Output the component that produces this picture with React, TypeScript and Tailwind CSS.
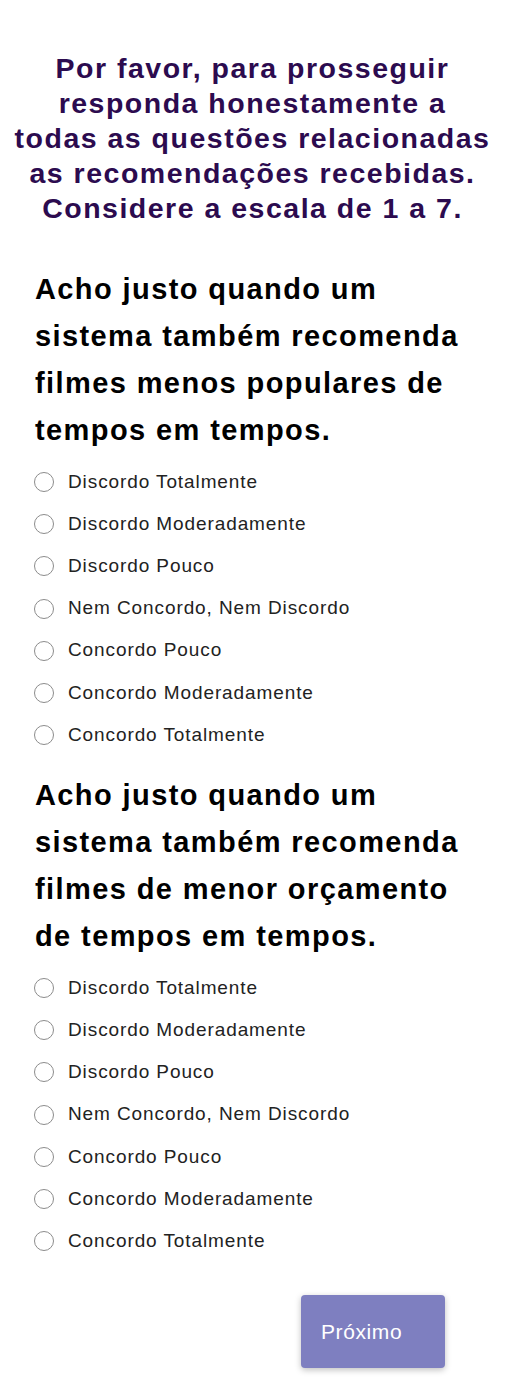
import React from "react";

const options = [
  "Discordo Totalmente",
  "Discordo Moderadamente",
  "Discordo Pouco",
  "Nem Concordo, Nem Discordo",
  "Concordo Pouco",
  "Concordo Moderadamente",
  "Concordo Totalmente",
];

function Question({ text, className }: { text: React.ReactNode; className?: string }) {
  return (
    <div className={className}>
      <h2 className="px-[35px] text-[29px] leading-[47px] font-bold tracking-[1.4px] text-black">
        {text}
      </h2>
      <div className="mt-[7px] flex flex-col">
        {options.map((o) => (
          <label key={o} className="flex h-[42.17px] items-center pl-[34px]">
            <span className="h-[20px] w-[20px] shrink-0 rounded-full border-[1.6px] border-[#8c8c8c] bg-white" />
            <span className="ml-[14px] text-[19px] tracking-[0.9px] text-[#222222]">{o}</span>
          </label>
        ))}
      </div>
    </div>
  );
}

export default function App() {
  return (
    <div
      className="min-h-[1378px] w-[505px] bg-white"
      style={{ fontFamily: '"Liberation Sans", Arial, sans-serif' }}
    >
      <div className="pt-[51px]">
        <h1 className="text-center text-[28.5px] leading-[35px] font-bold tracking-[1.5px] text-[#2c0b4f]">
          Por favor, para prosseguir
          <br />
          responda honestamente a
          <br />
          todas as questões relacionadas
          <br />
          as recomendações recebidas.
          <br />
          Considere a escala de 1 a 7.
        </h1>
      </div>
      <Question
        className="mt-[40px]"
        text={
          <>
            Acho justo quando um
            <br />
            sistema também recomenda
            <br />
            filmes menos populares de
            <br />
            tempos em tempos.
          </>
        }
      />
      <Question
        className="mt-[16px]"
        text={
          <>
            Acho justo quando um
            <br />
            sistema também recomenda
            <br />
            filmes de menor orçamento
            <br />
            de tempos em tempos.
          </>
        }
      />
      <div className="mt-[33px] flex justify-end pr-[60px]">
        <button className="flex h-[73px] w-[144px] items-center rounded-[4px] bg-[#7e7fc0] pl-[20px] text-[21px] tracking-[0.6px] text-white shadow-[0_2px_6px_rgba(0,0,0,0.25)]">
          Próximo
        </button>
      </div>
    </div>
  );
}
